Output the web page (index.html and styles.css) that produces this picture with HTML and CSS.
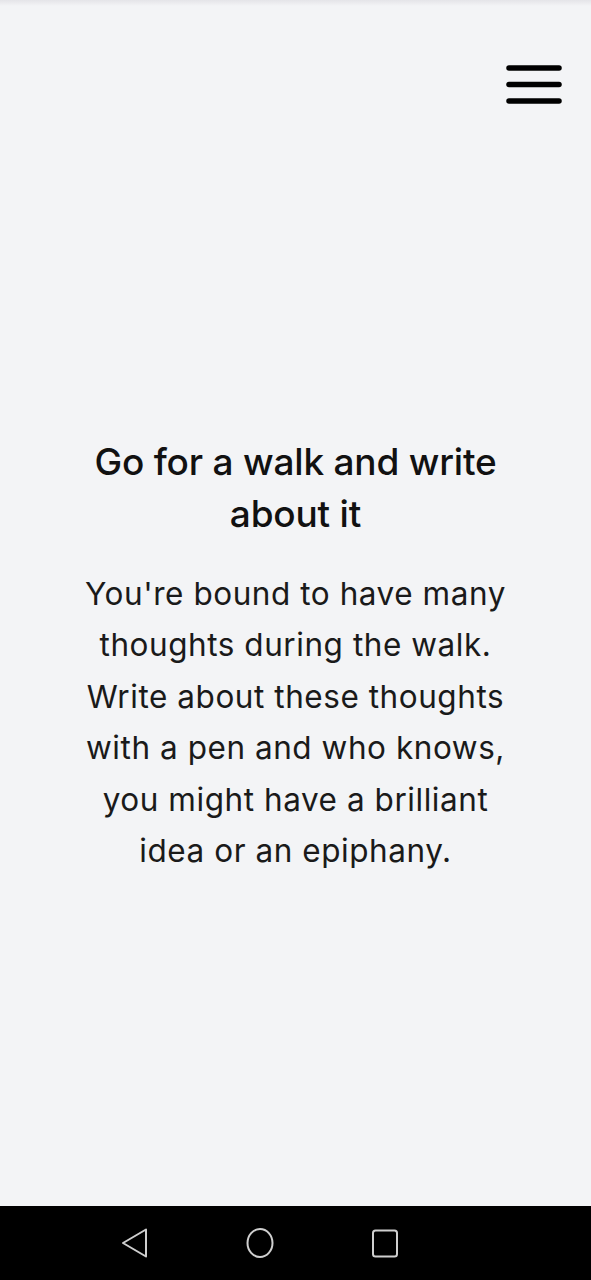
FILE: index.html
```html
<!DOCTYPE html>
<html lang="en">
<head>
<meta charset="utf-8">
<title>Go for a walk</title>
<link rel="stylesheet" href="styles.css">
</head>
<body>
<div class="screen">
  <header class="topbar">
    <button class="menu" aria-label="Menu">
      <svg width="56" height="44" viewBox="0 0 56 44" aria-hidden="true">
        <line x1="3" y1="6" x2="53" y2="6"/>
        <line x1="3" y1="22.5" x2="53" y2="22.5"/>
        <line x1="3" y1="39" x2="53" y2="39"/>
      </svg>
    </button>
  </header>
  <main class="content">
    <h1 class="title">Go for a walk and write about it</h1>
    <p class="text">You're bound to have many thoughts during the walk. Write about these thoughts with a pen and who knows, you might have a brilliant idea or an epiphany.</p>
  </main>
  <nav class="sysnav">
    <span class="navbtn">
      <svg width="30" height="32" viewBox="0 0 30 32"><path d="M26 2.5 L3 16 L26 29.5 Z"/></svg>
    </span>
    <span class="navbtn">
      <svg width="30" height="32" viewBox="0 0 30 32"><ellipse cx="15" cy="16" rx="12.5" ry="14"/></svg>
    </span>
    <span class="navbtn">
      <svg width="30" height="32" viewBox="0 0 30 32"><rect x="3" y="3.5" width="24" height="26" rx="2.5"/></svg>
    </span>
  </nav>
</div>
</body>
</html>
```
FILE: styles.css
```css
* { box-sizing: border-box; }
html, body { margin: 0; padding: 0; }
body {
  background: #f3f4f6;
  font-family: Inter, "Noto Sans", "Liberation Sans", sans-serif;
  color: #111111;
}
.screen {
  width: 591px;
  height: 1280px;
  display: flex;
  flex-direction: column;
  background: linear-gradient(to bottom, #e4e4e8 0, #f3f4f6 6px);
}
.topbar {
  display: flex;
  justify-content: flex-end;
  padding: 62px 29px 0 0;
}
.menu {
  border: 0;
  background: none;
  padding: 0;
  display: block;
}
.menu svg { display: block; }
.menu line {
  stroke: #000;
  stroke-width: 5.5;
  stroke-linecap: round;
}
.content {
  flex: 1;
  display: flex;
  flex-direction: column;
  align-items: center;
  padding-top: 330px;
}
.title {
  margin: 0;
  width: 440px;
  text-align: center;
  font-size: 37px;
  font-weight: 500;
  letter-spacing: -0.2px;
  line-height: 52px;
}
.text {
  margin: 28px 0 0;
  width: 450px;
  text-align: center;
  font-size: 31.5px;
  font-weight: 400;
  letter-spacing: 0.55px;
  line-height: 51.4px;
  color: #1a1a1a;
}
.sysnav {
  height: 74px;
  background: #000;
  display: flex;
  align-items: center;
  padding-left: 120px;
  gap: 95px;
}
.navbtn svg { display: block; }
.navbtn path, .navbtn ellipse, .navbtn rect {
  fill: none;
  stroke: #cfcfcf;
  stroke-width: 2;
  stroke-linejoin: round;
}
```
